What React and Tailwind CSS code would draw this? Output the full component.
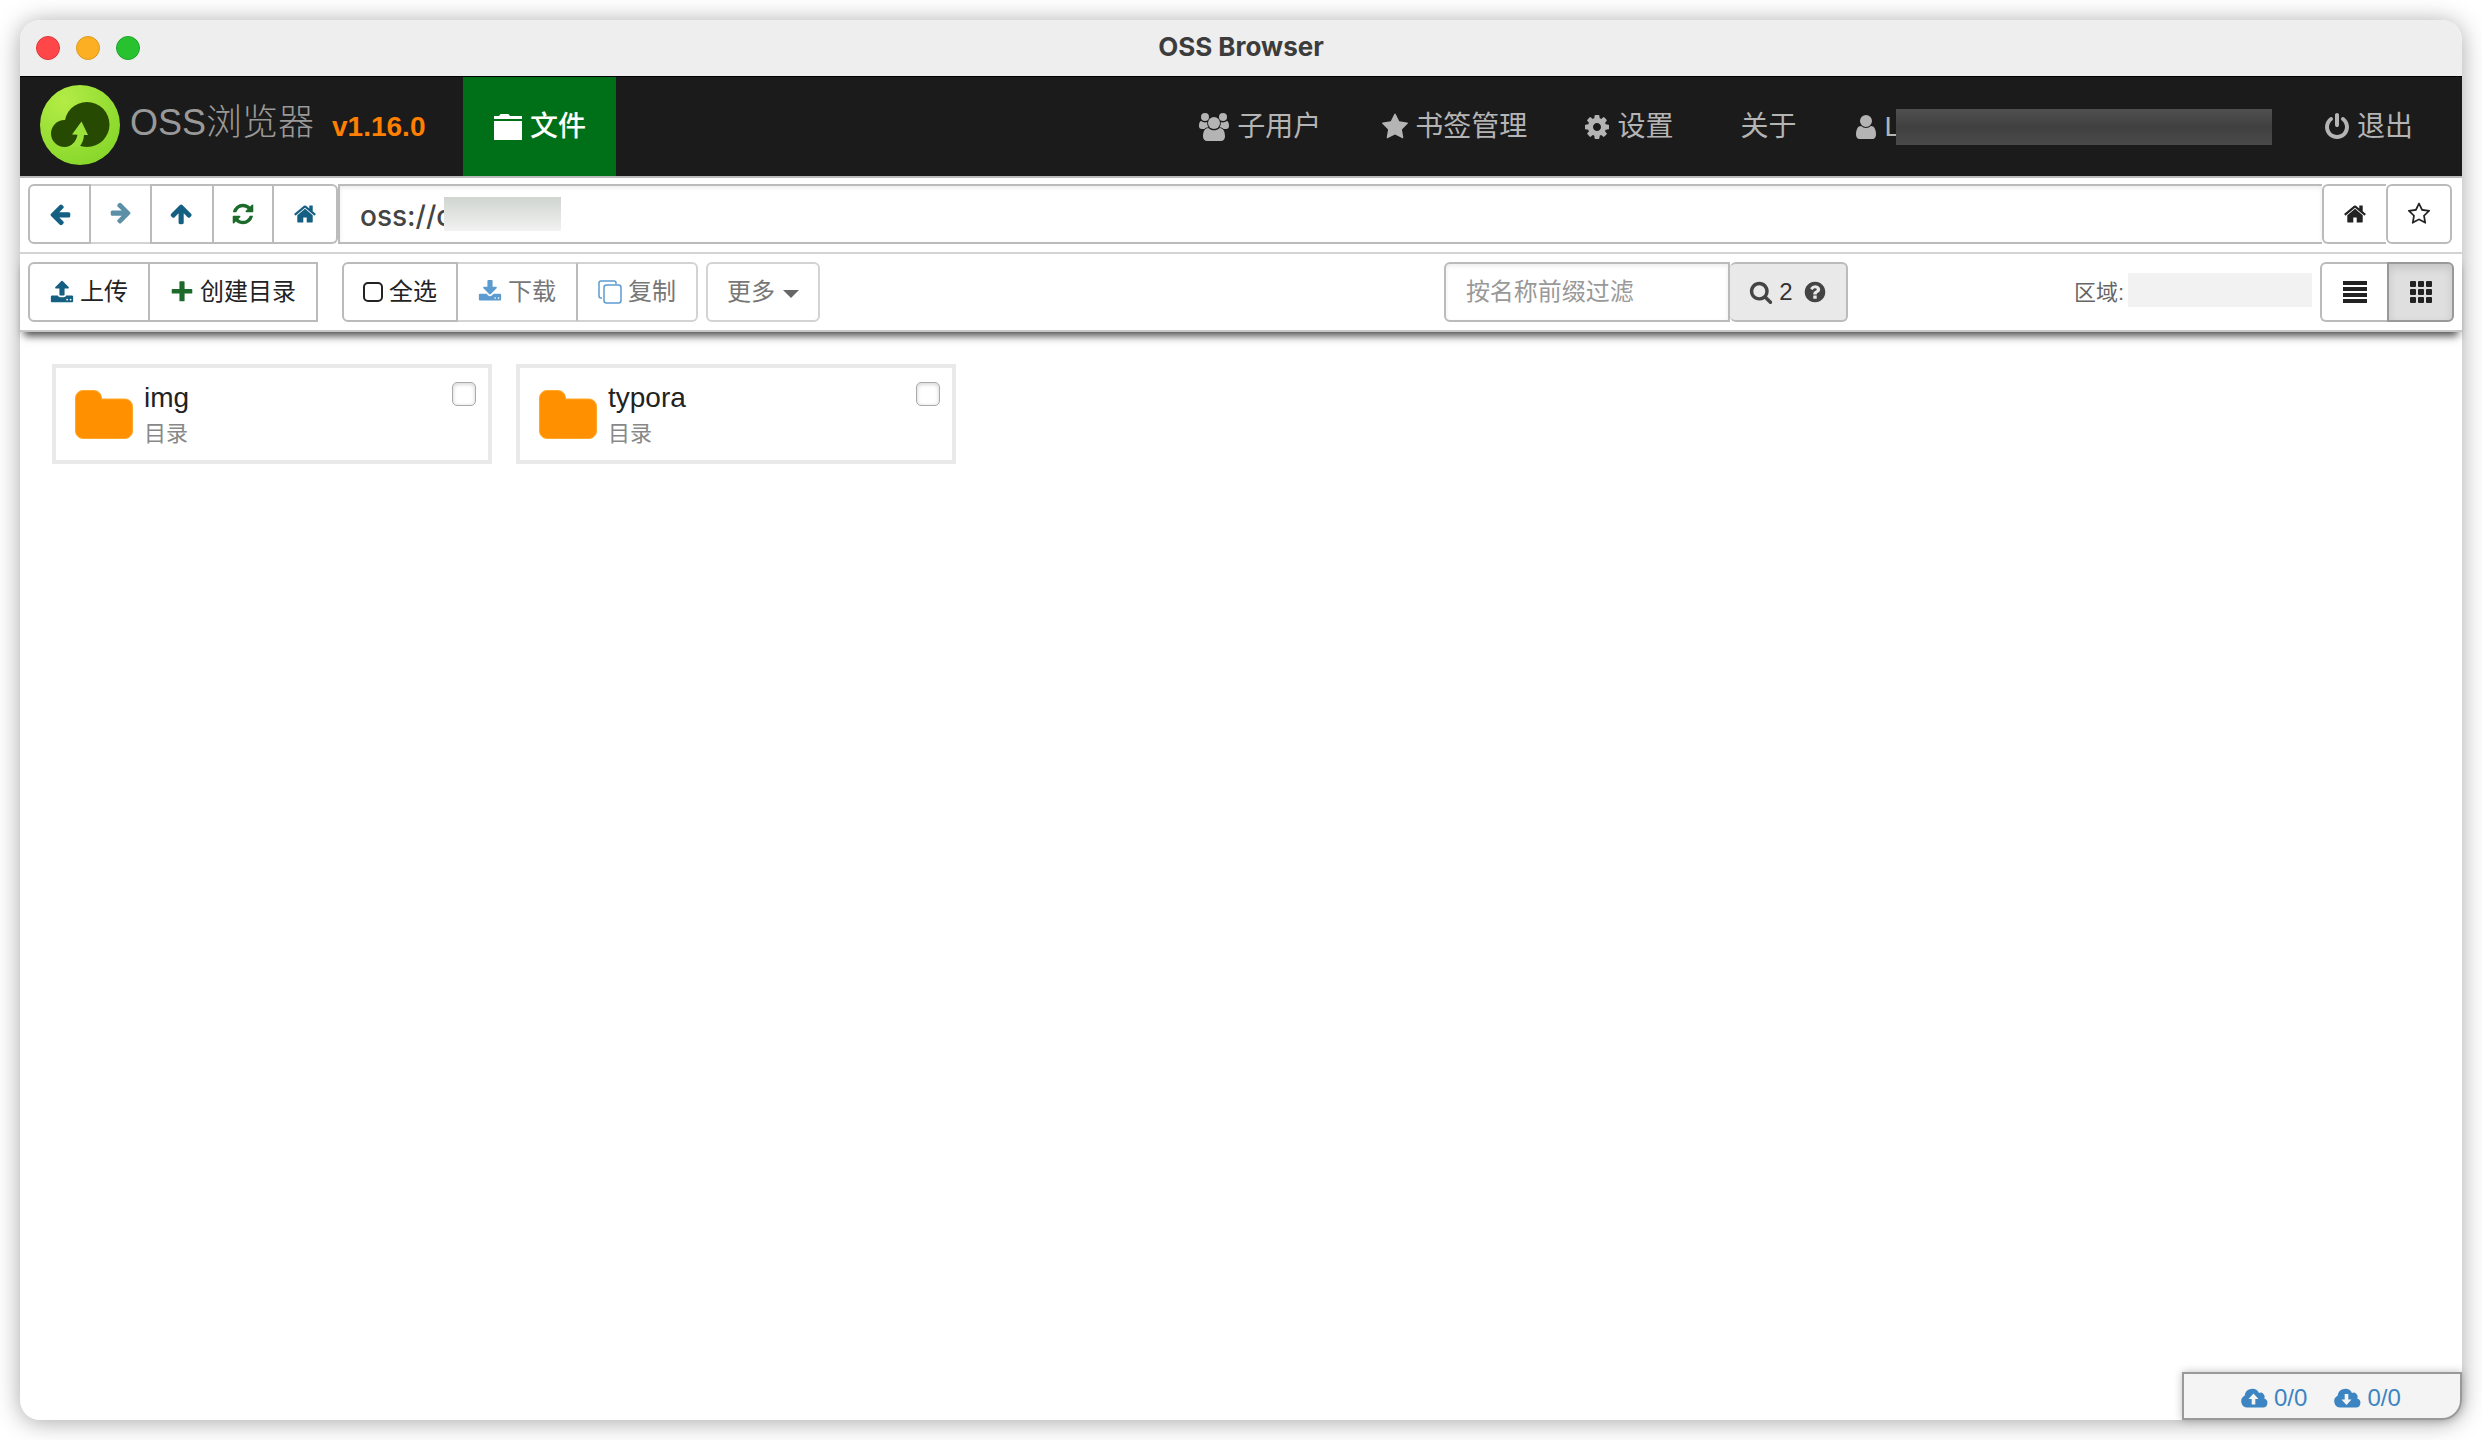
const P = {
  left: "M1664 896v128q0 53-32.5 90.5t-84.5 37.5h-704l293 294q38 36 38 90t-38 90l-75 76q-37 37-90 37-52 0-91-37l-651-652q-37-37-37-90 0-52 37-91l651-650q38-38 91-38 52 0 90 38l75 74q38 38 38 91t-38 91l-293 293h704q52 0 84.5 37.5t32.5 90.5z",
  home: "M1472 992v480q0 26-19 45t-45 19h-384v-384h-256v384h-384q-26 0-45-19t-19-45v-480q0-1 .5-3t.5-3l575-474 575 474q1 2 1 6zm223-69l-62 74q-8 9-21 11h-3q-13 0-21-7l-692-577-692 577q-12 8-24 7-13-2-21-11l-62-74q-8-10-7-23.5t11-21.5l719-599q32-26 76-26t76 26l244 204v-195q0-14 9-23t23-9h192q14 0 23 9t9 23v408l219 182q10 8 11 21.5t-7 23.5z",
  starO: "M1201 1004l306-297-422-62-189-382-189 382-422 62 306 297-73 421 378-199 377 199zm527-357q0 22-26 48l-363 354 86 500q1 7 1 20 0 50-41 50-19 0-40-12l-449-236-449 236q-22 12-40 12-21 0-31.5-14.5t-10.5-35.5q0-6 2-20l86-500-364-354q-25-27-25-48 0-37 56-46l502-73 225-455q19-41 49-41t49 41l225 455 502 73q56 9 56 46z",
  star: "M1728 647q0 22-26 48l-363 354 86 500q1 7 1 20 0 21-10.5 35.5t-30.5 14.5q-19 0-40-12l-449-236-449 236q-22 12-40 12-21 0-31.5-14.5t-10.5-35.5q0-6 2-20l86-500-364-354q-25-27-25-48 0-37 56-46l502-73 225-455q19-41 49-41t49 41l225 455 502 73q56 9 56 46z",
  plus: "M1664 716v248q0 50-50 50h-526v526q0 50-50 50h-284q-50 0-50-50v-526h-526q-50 0-50-50v-248q0-50 50-50h526v-526q0-50 50-50h284q50 0 50 50v526h526q50 0 50 50z",
  power: "M1664 896q0 156-61 298t-164 245-245 164-298 61-298-61-245-164-164-245-61-298q0-182 80.5-343t226.5-270q43-32 95.5-25t83.5 50q32 42 24.5 94.5t-49.5 84.5q-98 74-151.5 181t-53.5 228q0 104 40.5 198.5t109.5 163.5 163.5 109.5 198.5 40.5 198.5-40.5 163.5-109.5 109.5-163.5 40.5-198.5q0-121-53.5-228t-151.5-181q-42-32-49.5-84.5t24.5-94.5q31-43 84-50t95 25q146 109 226.5 270t80.5 343zm-640-768v640q0 52-38 90t-90 38-90-38-38-90v-640q0-52 38-90t90-38 90 38 38 90z",
  cog: "M1152 896q0-106-75-181t-181-75-181 75-75 181 75 181 181 75 181-75 75-181zm512-109v222q0 12-8 23t-20 13l-185 28q-19 54-39 91 35 50 107 138 10 12 10 25t-9 23q-27 37-99 108t-94 71q-12 0-26-9l-138-108q-44 23-91 38-16 136-29 186-7 28-36 28h-222q-14 0-24.5-8.5t-11.5-21.5l-28-184q-49-16-90-37l-141 107q-10 9-25 9-14 0-25-11-126-114-165-168-7-10-7-23 0-12 8-23 15-21 51-66.5t54-70.5q-27-50-41-99l-183-27q-13-2-21-12.5t-8-23.5v-222q0-12 8-23t19-13l186-28q14-46 39-92-40-57-107-138-10-12-10-24 0-10 9-23 26-36 98.5-107.5t94.5-71.5q13 0 26 10l138 107q44-23 91-38 16-136 29-186 7-28 36-28h222q14 0 24.5 8.5t11.5 21.5l28 184q49 16 90 37l142-107q9-9 24-9 13 0 25 10 129 119 165 170 7 8 7 22 0 12-8 23-15 21-51 66.5t-54 70.5q26 50 41 98l183 28q13 2 21 12.5t8 23.5z",
  user: "M1536 1399q0 109-62.5 187t-150.5 78h-854q-88 0-150.5-78t-62.5-187q0-85 8.5-160.5t31.5-152 58.5-131 94-89 134.5-34.5q131 128 313 128t313-128q76 0 134.5 34.5t94 89 58.5 131 31.5 152 8.5 160.5zm-256-887q0 159-112.5 271.5t-271.5 112.5-271.5-112.5-112.5-271.5 112.5-271.5 271.5-112.5 271.5 112.5 112.5 271.5z",
  search: "M1216 832q0-185-131.5-316.5t-316.5-131.5-316.5 131.5-131.5 316.5 131.5 316.5 316.5 131.5 316.5-131.5 131.5-316.5zm512 832q0 52-38 90t-90 38q-54 0-90-38l-343-342q-179 124-399 124-143 0-273.5-55.5t-225-150-150-225-55.5-273.5 55.5-273.5 150-225 225-150 273.5-55.5 273.5 55.5 225 150 150 225 55.5 273.5q0 220-124 399l343 343q37 37 37 90z",
  question: "M1024 1376v-192q0-14-9-23t-23-9h-192q-14 0-23 9t-9 23v192q0 14 9 23t23 9h192q14 0 23-9t9-23zm256-672q0-88-55.5-163t-138.5-116-170-41q-243 0-371 213-15 24 8 42l132 100q7 6 19 6 16 0 25-12 53-68 86-92 34-24 86-24 48 0 85.5 26t37.5 59q0 38-20 61t-68 45q-63 28-115.5 86.5t-52.5 125.5v36q0 14 9 23t23 9h192q14 0 23-9t9-23q0-19 21.5-49.5t54.5-49.5q32-18 49-28.5t46-35 44.5-48 28-60.5 12.5-81zm384 192q0 209-103 385.5t-279.5 279.5-385.5 103-385.5-103-279.5-279.5-103-385.5 103-385.5 279.5-279.5 385.5-103 385.5 103 279.5 279.5 103 385.5z",
  refresh: "M1639 1056q0 5-1 7-64 268-268 434.5t-478 166.5q-146 0-282.5-55t-243.5-157l-129 129q-19 19-45 19t-45-19-19-45v-448q0-26 19-45t45-19h448q26 0 45 19t19 45-19 45l-137 137q71 66 161 102t187 36q134 0 250-65t186-179q11-17 53-117 8-23 30-23h192q13 0 22.5 9.5t9.5 22.5zm25-800v448q0 26-19 45t-45 19h-448q-26 0-45-19t-19-45 19-45l138-138q-148-137-349-137-134 0-250 65t-186 179q-11 17-53 117-8 23-30 23h-199q-13 0-22.5-9.5t-9.5-22.5v-7q65-268 270-434.5t480-166.5q146 0 284 55.5t245 156.5l130-129q19-19 45-19t45 19 19 45z",
  upload: "M1344 1472q0-26-19-45t-45-19-45 19-19 45 19 45 45 19 45-19 19-45zm256 0q0-26-19-45t-45-19-45 19-19 45 19 45 45 19 45-19 19-45zm128-224v320q0 40-28 68t-68 28h-1472q-40 0-68-28t-28-68v-320q0-40 28-68t68-28h427q21 56 70.5 92t110.5 36h256q61 0 110.5-36t70.5-92h427q40 0 68 28t28 68zm-325-648q-17 40-59 40h-256v448q0 26-19 45t-45 19h-256q-26 0-45-19t-19-45v-448h-256q-42 0-59-40-17-39 14-69l448-448q18-19 45-19t45 19l448 448q31 30 14 69z",
  download: "M1344 1344q0-26-19-45t-45-19-45 19-19 45 19 45 45 19 45-19 19-45zm256 0q0-26-19-45t-45-19-45 19-19 45 19 45 45 19 45-19 19-45zm128-224v320q0 40-28 68t-68 28h-1472q-40 0-68-28t-28-68v-320q0-40 28-68t68-28h465l135 136q58 56 136 56t136-56l136-136h464q40 0 68 28t28 68zm-325-569q17 41-14 70l-448 448q-18 19-45 19t-45-19l-448-448q-31-29-14-70 17-39 59-39h256v-448q0-26 19-45t45-19h256q26 0 45 19t19 45v448h256q42 0 59 39z",
};

function Icon({ name, className = "size-6" }) {
  return (
    <svg viewBox="0 0 1792 1792" className={`shrink-0 ${className}`} fill="currentColor" aria-hidden="true">
      <path d={P[name]} />
    </svg>
  );
}

function Users() {
  return (
    <svg viewBox="0 0 30 28" className="h-7 w-[30px] shrink-0" fill="currentColor" aria-hidden="true">
      <circle cx="6" cy="4" r="4" />
      <circle cx="24" cy="4" r="4" />
      <path d="M0 13c0-3 .8-5 2.300-5 1.200 1 2.500 1.400 3.700 1.400.9 0 1.700-.2 2.200-.4-.2 2.200.3 3.800 1.300 5.200C7.500 14.300 6.300 15 5.500 16H2.800C1 16 0 15 0 13z" />
      <path d="M30 13c0-3-.8-5-2.300-5-1.200 1-2.500 1.400-3.700 1.400-.9 0-1.700-.2-2.200-.4.2 2.200-.3 3.800-1.300 5.200 2 .1 3.200.8 4 1.800h2.700c1.800 0 2.800-1 2.800-3z" />
      <circle cx="15" cy="10" r="6" />
      <path d="M4 23.500C4 18.800 5.600 15 9.300 15c1.700 1.500 3.600 2.300 5.700 2.300s4-.8 5.700-2.300c3.700 0 5.300 3.800 5.300 8.500 0 2.700-1.700 4.500-4.200 4.500H8.200C5.700 28 4 26.200 4 23.500z" />
    </svg>
  );
}

function Logo() {
  return (
    <svg viewBox="0 0 80 80" className="mb-1 size-20 shrink-0" aria-hidden="true">
      <defs>
        <radialGradient id="lime" cx="0.3" cy="0.2" r="0.9">
          <stop offset="0" stopColor="#b3ec45" />
          <stop offset="1" stopColor="#86d62a" />
        </radialGradient>
      </defs>
      <circle cx="40" cy="40" r="40" fill="url(#lime)" />
      <circle cx="24.500" cy="48.500" r="13.500" fill="#274a02" />
      <circle cx="47" cy="39.500" r="22.500" fill="#274a02" />
      <path d="M41.500 36.500 48 50h-4c-.2 5-2 8.500-4.500 11.500L28 62c5-2.500 8.500-6.500 9.500-12.300l-5.500-.2z" fill="#9be33a" />
    </svg>
  );
}

function Folder() {
  return (
    <svg viewBox="0 0 58 49" className="h-[49px] w-[58px] shrink-0" aria-hidden="true">
      <path d="M8 .5h11a7.500 7.500 0 0 1 7.500 7.500v1h23.500a7.500 7.500 0 0 1 7.500 7.500v24.500a7.500 7.500 0 0 1-7.500 7.500H8a7.500 7.500 0 0 1-7.500-7.500V8A7.500 7.500 0 0 1 8 .5z" fill="#ff9000" stroke="#ffa929" />
    </svg>
  );
}

function Cloud({ up }) {
  return (
    <svg viewBox="0 0 27 20" className="h-5 w-[27px] shrink-0" aria-hidden="true">
      <path d="M6.300 19.500A6.200 6.200 0 0 1 3.600 7.800 7.700 7.700 0 0 1 18 4.900a4.200 4.200 0 0 1 5.300 5.500 4.700 4.700 0 0 1-1.200 9.100z" fill="currentColor" />
      <path d={up ? "M12.500 5.500l5 5.500h-3.200v5.500h-3.600V11H7.500z" : "M12.500 17l5-5.500h-3.200V6h-3.600v5.500H7.500z"} fill="#f4f4f4" />
    </svg>
  );
}

const navLink = "flex items-center text-[28px] text-[#b4b4b4]";
const btn = "flex h-[60px] items-center justify-center border-2 border-[#bbb] bg-white";

function Card({ name }) {
  return (
    <article className="flex h-[100px] w-[440px] items-start border-4 border-[#e9e9e9] pt-[14px] pr-3 pl-[19px]">
      <div className="mt-2"><Folder /></div>
      <div className="ml-[11px] flex-1">
        <a href="#" className="block text-[28px] leading-8 text-[#222]">{name}</a>
        <div className="mt-1 text-[22px] leading-8 text-[#888]">目录</div>
      </div>
      <input
        type="checkbox"
        aria-label={name}
        className="size-6 appearance-none rounded-[5px] border border-[#aaa] bg-white shadow-[inset_0_1px_4px_rgba(0,0,0,0.2)]"
      />
    </article>
  );
}

export default function App() {
  return (
    <div className="h-screen bg-white p-5 font-['Liberation_Sans','Noto_Sans_CJK_SC',sans-serif]">
      <div className="relative flex h-full flex-col rounded-[20px] bg-white shadow-[0_2px_24px_rgba(0,0,0,0.35)]">
        <header className="relative flex h-14 shrink-0 items-center justify-center rounded-t-[20px] bg-[#eee] pb-1">
          <div className="absolute top-4 left-4 flex gap-4">
            <button aria-label="Close" className="size-6 rounded-full border border-[#e0383c] bg-[#ff4649]" />
            <button aria-label="Minimize" className="size-6 rounded-full border border-[#dd9a1c] bg-[#fdaf24]" />
            <button aria-label="Zoom" className="size-6 rounded-full border border-[#1fa62a] bg-[#28c231]" />
          </div>
          <h1 className="font-['Inter'] text-[26px] font-bold text-[#3c3c3c]">OSS Browser</h1>
        </header>

        <nav className="flex h-[102px] shrink-0 border-t border-b-2 border-t-black border-b-[#bbb] bg-[#1b1b1b]">
          <a href="#" className="flex items-center pl-5">
            <Logo />
            <span className="mb-2 ml-[10px] text-[36px] font-light text-[#999]">OSS浏览器</span>
            <span className="ml-[18px] text-[28px] font-bold text-[#ff8000]">v1.16.0</span>
          </a>
          <a href="#" className="ml-[38px] flex w-[153px] items-center justify-center gap-2 bg-[#007018] text-[28px] font-medium text-white">
            <svg viewBox="0 0 28 26" className="h-[26px] w-7" fill="currentColor" aria-hidden="true">
              <path d="M0 2h5l1.500-2h8L16 2h12v3H0zM0 7h28v19H0z" />
            </svg>
            文件
          </a>
          <div className="ml-auto flex pr-[49px]">
            <a href="#" className={`${navLink} gap-2`}><Users />子用户</a>
            <a href="#" className={`${navLink} ml-[60px] gap-1.5`}><Icon name="star" className="size-7" />书签管理</a>
            <a href="#" className={`${navLink} ml-14 gap-1.5`}><Icon name="cog" className="size-7" />设置</a>
            <a href="#" className={`${navLink} ml-[67px]`}>关于</a>
            <a href="#" className={`${navLink} ml-14 gap-1`}>
              <Icon name="user" className="size-7" />
              <span className="flex items-center">
                <span>L</span>
                <span className="relative -ml-1 h-9 w-[376px] bg-linear-to-b from-[#505050] via-[#404040] to-[#4a4a4a]" />
              </span>
            </a>
            <a href="#" className={`${navLink} ml-[51px] gap-1.5`}><Icon name="power" className="size-7" />退出</a>
          </div>
        </nav>

        <div className="flex h-[76px] shrink-0 items-start border-b-2 border-[#d3d3d3] pt-[6px] pr-[10px] pl-2">
          <button aria-label="Back" className={`${btn} w-[63px] rounded-l-md text-[#155f83]`}><Icon name="left" /></button>
          <button aria-label="Forward" disabled className={`${btn} w-[59px] border-x-0 border-[#d3d3d3] text-[#5b8fa8]`}><Icon name="left" className="size-6 rotate-180" /></button>
          <button aria-label="Up" className={`${btn} w-[64px] text-[#155f83]`}><Icon name="left" className="size-6 rotate-90" /></button>
          <button aria-label="Refresh" className={`${btn} w-[60px] border-l-0 text-[#1c6b2a]`}><Icon name="refresh" /></button>
          <button aria-label="Home" className={`${btn} w-[64px] rounded-r-md border-l-0 text-[#155f83]`}><Icon name="home" /></button>
          <div className="flex h-[60px] flex-1 items-center border-2 border-r-0 border-[#bbb] pl-5 shadow-[inset_0_2px_4px_rgba(0,0,0,0.08)]">
            <input
              aria-label="Address"
              defaultValue="oss://c"
              className="w-[84px] bg-transparent pt-1 font-['Inter'] text-[28px] font-medium text-[#444] outline-none"
            />
            <span className="h-[34px] w-[117px] bg-linear-to-b from-[#d0d5d0] to-[#f1f2f1]" />
          </div>
          <button aria-label="Set as home" className={`${btn} w-16 rounded-l-md border-r-0 text-[#222]`}><Icon name="home" /></button>
          <button aria-label="Bookmark" className={`${btn} w-[66px] rounded-md text-[#222]`}><Icon name="starO" /></button>
        </div>

        <div className="relative flex h-[78px] shrink-0 items-start border-b-2 border-[#c8c8c8] pt-2 pr-2 pl-2 text-[24px] text-[#222] shadow-[0_8px_8px_-4px_rgba(0,0,0,0.7)]">
          <button className={`${btn} w-[122px] gap-1.5 rounded-l-md`}><Icon name="upload" className="size-6 text-[#155f83]" />上传</button>
          <button className={`${btn} w-[168px] gap-1.5 border-l-0`}><Icon name="plus" className="size-6 text-[#1c6b2a]" />创建目录</button>
          <button className={`${btn} ml-6 w-[116px] gap-1.5 rounded-l-md`}>
            <span className="size-5 rounded-[5px] border-2 border-[#222]" />全选
          </button>
          <button disabled className={`${btn} w-[120px] gap-1.5 border-l-0 border-y-[#d3d3d3] text-[#777]`}><Icon name="download" className="size-6 text-[#5c9bd0]" />下载</button>
          <button disabled className={`${btn} w-[120px] gap-1.5 rounded-r-md border-l-0 border-[#d3d3d3] text-[#777]`}>
            <svg viewBox="0 0 24 24" className="size-6" fill="none" stroke="#5c9bd0" strokeWidth="1.500" aria-hidden="true">
              <path d="M4 18H3a2 2 0 0 1-2-2V3a2 2 0 0 1 2-2h13a2 2 0 0 1 2 2v1" />
              <rect x="6" y="5" width="17" height="18" rx="2.500" />
            </svg>
            复制
          </button>
          <button disabled className={`${btn} ml-2 w-[114px] gap-2 rounded-md border-[#d3d3d3] text-[#777]`}>
            更多
            <svg viewBox="0 0 16 8" className="mt-1 h-2 w-4" fill="#666" aria-hidden="true"><path d="M0 0h16L8 8z" /></svg>
          </button>

          <div className="ml-auto flex">
            <input
              aria-label="按名称前缀过滤"
              placeholder="按名称前缀过滤"
              className="h-[60px] w-[286px] rounded-l-md border-2 border-[#bbb] px-5 shadow-[inset_0_2px_4px_rgba(0,0,0,0.08)] placeholder:text-[#999]"
            />
            <button className="flex h-[60px] w-[118px] items-center justify-center gap-1.5 rounded-md border-2 border-l-0 border-[#bbb] bg-[#e9e9e9] text-[#333]">
              <Icon name="search" className="size-6 text-[#444]" />2<Icon name="question" className="ml-1 size-6 text-[#444]" />
            </button>
          </div>
          <div className="ml-[226px] flex h-[60px] items-center text-[22px] text-[#666]">
            区域:
            <span className="mr-2 mb-1 ml-1 h-[34px] w-[184px] bg-[#f2f2f2]" />
          </div>
          <button aria-label="List view" className={`${btn} w-[67px] rounded-l-md border-r-0`}>
            <svg viewBox="0 0 24 22" className="h-[22px] w-6" fill="currentColor" aria-hidden="true">
              <path d="M0 0h24v4H0zM0 6h24v4H0zM0 12h24v4H0zM0 18h24v4H0z" />
            </svg>
          </button>
          <button aria-label="Grid view" className="flex h-[60px] w-[67px] items-center justify-center rounded-r-md border-2 border-[#999] bg-[#dfdfdf] shadow-[inset_0_4px_8px_rgba(0,0,0,0.12)]">
            <svg viewBox="0 0 22 22" className="size-[22px]" fill="currentColor" aria-hidden="true">
              {[0, 8, 16].map((y) => [0, 8, 16].map((x) => <rect key={`${x}-${y}`} x={x} y={y} width="6" height="6" rx="1" />))}
            </svg>
          </button>
        </div>

        <main className="flex flex-1 flex-wrap content-start gap-6 px-8 pt-8">
          <Card name="img" />
          <Card name="typora" />
        </main>

        <footer className="absolute right-0 bottom-0 flex h-12 w-[280px] items-center gap-[27px] rounded-br-[20px] border-2 border-[#999] bg-[#f4f4f4] pt-1 pl-[57px] text-[24px] text-[#3c84c2] shadow-[0_0_8px_rgba(0,0,0,0.25)]">
          <a href="#" className="flex items-center gap-[6px]"><Cloud up />0/0</a>
          <a href="#" className="flex items-center gap-[6px]"><Cloud />0/0</a>
        </footer>
      </div>
    </div>
  );
}
